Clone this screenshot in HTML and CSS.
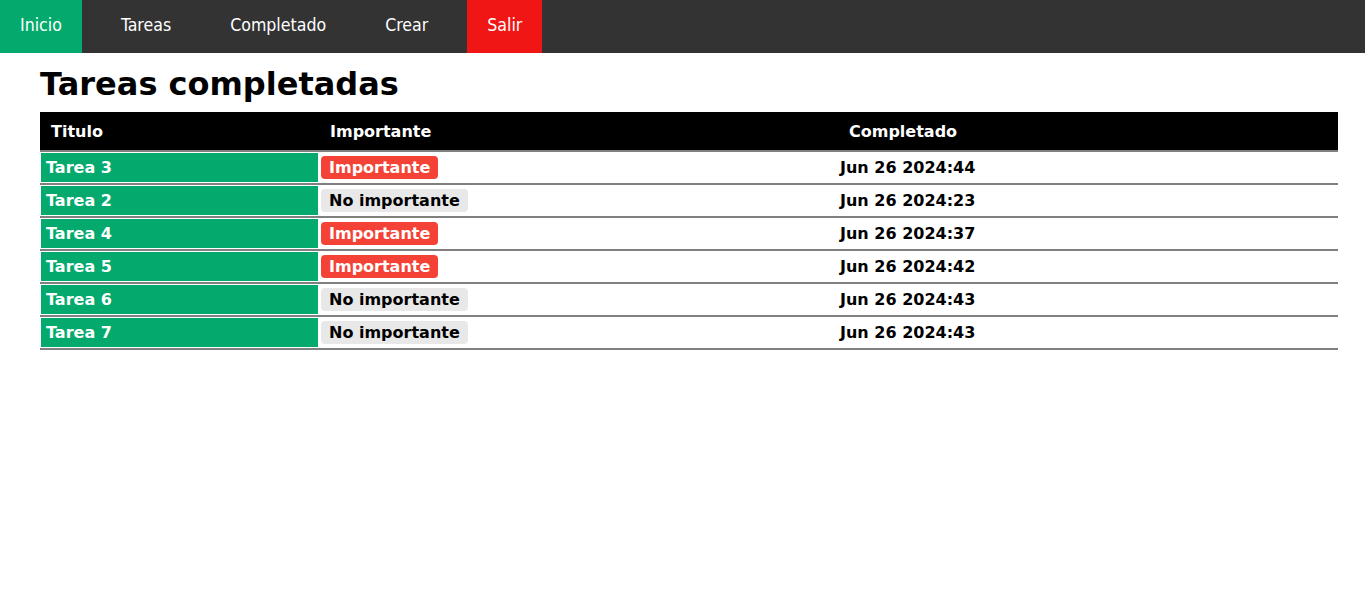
FILE: index.html
```html
<!DOCTYPE html>
<html lang="es">
<head>
<meta charset="utf-8">
<title>Tareas completadas</title>
<link rel="stylesheet" href="styles.css">
</head>
<body>
<nav class="topnav">
  <a class="nav-item active" href="#">Inicio</a>
  <a class="nav-item" href="#">Tareas</a>
  <a class="nav-item" href="#">Completado</a>
  <a class="nav-item" href="#">Crear</a>
  <a class="nav-item logout" href="#">Salir</a>
</nav>
<main class="content">
  <h1 class="page-title">Tareas completadas</h1>
  <table class="tasks">
    <thead>
      <tr>
        <th class="col-title">Titulo</th>
        <th class="col-imp">Importante</th>
        <th class="col-done">Completado</th>
      </tr>
    </thead>
    <tbody>
      <tr><td class="title">Tarea 3</td><td class="imp"><span class="badge red">Importante</span></td><td class="date">Jun 26 2024:44</td></tr>
      <tr><td class="title">Tarea 2</td><td class="imp"><span class="badge gray">No importante</span></td><td class="date">Jun 26 2024:23</td></tr>
      <tr><td class="title">Tarea 4</td><td class="imp"><span class="badge red">Importante</span></td><td class="date">Jun 26 2024:37</td></tr>
      <tr><td class="title">Tarea 5</td><td class="imp"><span class="badge red">Importante</span></td><td class="date">Jun 26 2024:42</td></tr>
      <tr><td class="title">Tarea 6</td><td class="imp"><span class="badge gray">No importante</span></td><td class="date">Jun 26 2024:43</td></tr>
      <tr><td class="title">Tarea 7</td><td class="imp"><span class="badge gray">No importante</span></td><td class="date">Jun 26 2024:43</td></tr>
    </tbody>
  </table>
</main>
</body>
</html>
```
FILE: styles.css
```css
* { box-sizing: border-box; }
body {
  margin: 0;
  font-family: "DejaVu Sans", Verdana, sans-serif;
  background: #fff;
  color: #000;
}
.topnav {
  display: flex;
  height: 53px;
  background: #333;
  gap: 19px;
}
.nav-item {
  display: flex;
  align-items: center;
  padding: 0 20px 4px;
  color: #fff;
  text-decoration: none;
  font-family: "DejaVu Sans Condensed", "DejaVu Sans", sans-serif;
  font-size: 17.6px;
}
.nav-item.active { background: #04aa6d; }
.nav-item.logout { background: #f11616; }
.content {
  padding-left: 40px;
}
.page-title {
  margin: 11px 0 8px;
  font-size: 32px;
  line-height: 40px;
  font-weight: bold;
}
.tasks {
  width: 1298px;
  border-collapse: collapse;
  font-size: 16px;
  font-weight: bold;
}
.tasks thead tr {
  background: #000;
  color: #fff;
  height: 39px;
}
.tasks th {
  text-align: left;
  padding: 0 0 0 11px;
  font-weight: bold;
}
.tasks th.col-title { width: 279px; }
.tasks th.col-imp { width: 515px; }
.tasks th.col-done { padding-left: 15px; }
.tasks tr { border-bottom: 2px solid #808080; }
.tasks td {
  height: 33px;
  padding: 0;
}
.tasks td.title {
  background: #04aa6d;
  color: #fff;
  padding-left: 6px;
  box-shadow: inset 0 0 0 1px #fff;
}
.tasks td.imp { padding-left: 2px; }
.tasks td.date { padding-left: 6px; }
.badge {
  display: inline-block;
  height: 23px;
  line-height: 23px;
  padding: 0 8px;
  border-radius: 4px;
}
.badge.red { background: #f44336; color: #fff; }
.badge.gray { background: #e8e8e8; color: #000; }
```
